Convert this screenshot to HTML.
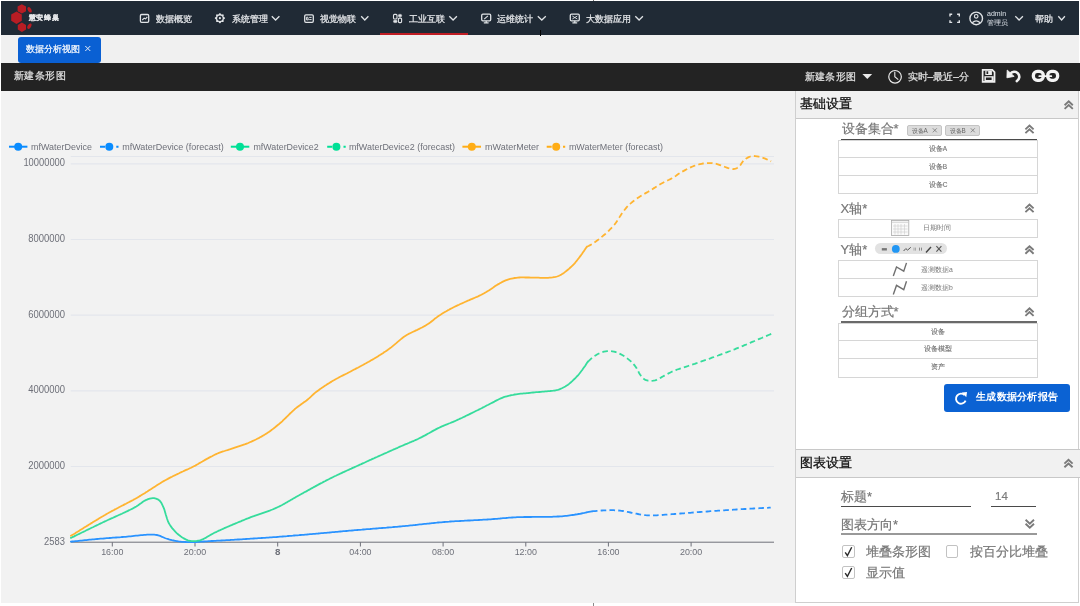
<!DOCTYPE html>
<html><head><meta charset="utf-8">
<style>
*{box-sizing:border-box;margin:0;padding:0}
html,body{width:1080px;height:606px;overflow:hidden;background:#fff;font-family:"Liberation Sans",sans-serif}
#root{position:absolute;left:0;top:0;width:1080px;height:606px;will-change:transform}
.a{position:absolute;white-space:nowrap}
#nav{left:1px;top:1px;width:1078px;height:34px;background:#202a35}
.nt{color:#e4e6e9;font-size:9px;line-height:12px;height:12px;top:12.5px;-webkit-text-stroke:0.25px #e4e6e9}
#tabs{left:1px;top:35px;width:1078px;height:28px;background:#f0f0f0}
#tab{left:17.5px;top:37px;width:83px;height:25.6px;background:#0a60d3;border-radius:3px}
#tbar{left:1px;top:63px;width:1079px;height:28px;background:#232323}
#chart{left:1px;top:91px;width:794px;height:512px;background:#f2f2f2}
#rp{left:795px;top:91px;width:284px;height:512px;background:#fff;border:1px solid #cfcfcf;border-top:none}
.hd{background:#f1f1f1;border-bottom:1px solid #c8c8c8}
.lbl{color:#777;font-size:13px;line-height:14px;height:14px;-webkit-text-stroke:0.2px #777}
.hdt{color:#111;font-size:13px;line-height:14px;height:14px;-webkit-text-stroke:0.3px #111}
.box{border:1px solid #d6d6d6;background:#fff}
.row{border-top:1px solid #d6d6d6}
.rt{color:#777;font-size:6.5px;line-height:8px;text-align:center;-webkit-text-stroke:0.15px #777}
svg{position:absolute;overflow:visible}
</style></head><body><div id="root">
<!-- NAV -->
<div id="nav" class="a"></div>
<svg style="left:0;top:0" width="80" height="36" viewBox="0 0 80 36">
 <g fill="#b81d24">
  <polygon points="16.5,11.5 21.8,14.6 21.8,20.8 16.5,23.9 11.2,20.8 11.2,14.6"/>
  <polygon points="21.8,4.2 26,6.6 26,11.2 21.8,13.6 17.6,11.2 17.6,6.6"/>
  <polygon points="21.9,22.5 26,24.9 26,29.6 21.9,32 17.8,29.6 17.8,24.9"/>
  <ellipse cx="29.6" cy="9.8" rx="1.7" ry="3" transform="rotate(-30 29.6 9.8)"/>
  <ellipse cx="29.4" cy="26.2" rx="1.7" ry="3" transform="rotate(30 29.4 26.2)"/>
 </g>
</svg>
<div class="a" style="left:28.5px;top:12px;font-size:7px;letter-spacing:0.9px;line-height:12px;color:#e4e6e9;font-weight:bold;-webkit-text-stroke:0.15px #e4e6e9">慧安蜂巢</div>

<!-- nav icons -->
<svg style="left:0;top:0" width="1080" height="36" viewBox="0 0 1080 36" fill="none" stroke="#e0e3e6" stroke-width="1.3">
 <rect x="140.4" y="14.5" width="8.3" height="7.8" rx="1.2"/>
 <path d="M142.3 20 L144.2 18.2 L145.6 18.9 L147.3 16.9" stroke-width="1.1"/>
 <polygon points="225.00,18.20 224.92,18.53 224.68,18.83 224.36,19.09 224.03,19.31 223.76,19.51 223.60,19.73 223.55,20.00 223.60,20.34 223.68,20.73 223.73,21.14 223.68,21.51 223.51,21.81 223.21,21.98 222.84,22.03 222.43,21.98 222.04,21.90 221.70,21.85 221.43,21.90 221.21,22.06 221.01,22.33 220.79,22.66 220.53,22.98 220.23,23.22 219.90,23.30 219.57,23.22 219.27,22.98 219.01,22.66 218.79,22.33 218.59,22.06 218.37,21.90 218.10,21.85 217.76,21.90 217.37,21.98 216.96,22.03 216.59,21.98 216.29,21.81 216.12,21.51 216.07,21.14 216.12,20.73 216.20,20.34 216.25,20.00 216.20,19.73 216.04,19.51 215.77,19.31 215.44,19.09 215.12,18.83 214.88,18.53 214.80,18.20 214.88,17.87 215.12,17.57 215.44,17.31 215.77,17.09 216.04,16.89 216.20,16.67 216.25,16.40 216.20,16.06 216.12,15.67 216.07,15.26 216.12,14.89 216.29,14.59 216.59,14.42 216.96,14.37 217.37,14.42 217.76,14.50 218.10,14.55 218.37,14.50 218.59,14.34 218.79,14.07 219.01,13.74 219.27,13.42 219.57,13.18 219.90,13.10 220.23,13.18 220.53,13.42 220.79,13.74 221.01,14.07 221.21,14.34 221.43,14.50 221.70,14.55 222.04,14.50 222.43,14.42 222.84,14.37 223.21,14.42 223.51,14.59 223.68,14.89 223.73,15.26 223.68,15.67 223.60,16.06 223.55,16.40 223.60,16.67 223.76,16.89 224.03,17.09 224.36,17.31 224.68,17.57 224.92,17.87" fill="#e0e3e6" stroke="none"/>
 <circle cx="219.9" cy="18.2" r="2.7" fill="#202a35" stroke="none"/>
 <circle cx="219.9" cy="18.2" r="1.1" fill="#e0e3e6" stroke="none"/>
 <rect x="304.7" y="14.9" width="8.6" height="7.4" rx="1.2"/>
 <path d="M306.6 17.2 L307.8 17.2 L308.3 19.9 L306.6 19.9 Z M309.2 17.4 H311.6 M309.2 19.6 H311.6" stroke-width="1"/>
 <rect x="393.5" y="14.4" width="3.5" height="4.6" rx="1" stroke-width="1.1"/>
 <rect x="398.4" y="14.4" width="3.2" height="2.4" rx="1" fill="#e0e3e6" stroke-width="0.6"/>
 <rect x="393.5" y="20.3" width="3.5" height="2.3" rx="1" fill="#e0e3e6" stroke-width="0.6"/>
 <rect x="398.4" y="18.1" width="3.2" height="4.5" rx="1" stroke-width="1.1"/>
 <rect x="481.7" y="14.2" width="9" height="6.6" rx="1.2"/>
 <path d="M486.2 20.8 V22.6 M483.8 22.9 H488.6" stroke-width="1.2"/>
 <path d="M484.2 19.2 L487.9 15.8" stroke-width="1.1"/>
 <rect x="570.3" y="14.2" width="9" height="6.6" rx="1.2"/>
 <path d="M574.8 20.8 V22.6 M572.4 22.9 H577.2" stroke-width="1.2"/>
 <path d="M572.3 16 L577.3 19 M577.3 16 L572.3 19" stroke-width="0.9"/>
 <!-- chevrons -->
 <path d="M271.8 16.3 L275.6 20 L279.4 16.3"/>
 <path d="M361.2 16.3 L364.8 20 L368.4 16.3"/>
 <path d="M449.3 16.3 L453.1 20 L456.9 16.3"/>
 <path d="M537.8 16.3 L541.8 20 L545.8 16.3"/>
 <path d="M635.3 16.3 L639.1 20 L642.9 16.3"/>
 <path d="M1015.3 16.3 L1019.1 20 L1022.9 16.3"/>
 <path d="M1058.3 16.3 L1061.6 20 L1064.9 16.3"/>
 <!-- fullscreen -->
 <path d="M950 16.5 V14.3 H952.2 M957.1 14.3 H959.3 V16.5 M959.3 20.2 V22.4 H957.1 M952.2 22.4 H950 V20.2" stroke-width="1.4"/>
 <!-- user -->
 <circle cx="976.2" cy="18.4" r="6.3" stroke-width="1.4"/>
 <circle cx="976.2" cy="16.3" r="1.8" stroke-width="1.2"/>
 <path d="M972.3 22.8 Q976.2 19 980.1 22.8" stroke-width="1.3"/>
</svg>
<div class="a nt" style="left:156px">数据概览</div>
<div class="a nt" style="left:232px">系统管理</div>
<div class="a nt" style="left:320px">视觉物联</div>
<div class="a nt" style="left:408.5px">工业互联</div>
<div class="a nt" style="left:497px">运维统计</div>
<div class="a nt" style="left:586px">大数据应用</div>
<div class="a" style="left:380px;top:32.5px;width:88px;height:2px;background:#c01d24"></div>
<div class="a" style="left:987px;top:10.3px;font-size:7px;line-height:8px;color:#dde2e8">admin</div>
<div class="a" style="left:987px;top:18.8px;font-size:7px;line-height:8px;color:#dde2e8">管理员</div>
<div class="a nt" style="left:1035px">帮助</div>

<!-- TABS -->
<div id="tabs" class="a"></div>
<div id="tab" class="a"></div>
<div class="a" style="left:25.5px;top:42.6px;font-size:8.8px;line-height:12px;color:#fff;-webkit-text-stroke:0.2px #fff">数据分析视图</div>
<svg style="left:0;top:0" width="100" height="60"><path d="M85.3 46 L90.3 51 M90.3 46 L85.3 51" stroke="#e8eef8" stroke-width="1"/></svg>

<!-- TITLE BAR -->
<div id="tbar" class="a"></div>
<div class="a" style="left:13.7px;top:69.4px;font-size:10px;letter-spacing:0.5px;line-height:13px;color:#e6e6e6;-webkit-text-stroke:0.2px #e6e6e6">新建条形图</div>
<div class="a" style="left:804.5px;top:69.5px;font-size:10px;letter-spacing:0.45px;line-height:13px;color:#e6e6e6;-webkit-text-stroke:0.2px #e6e6e6">新建条形图</div>
<div class="a" style="left:907.5px;top:69.5px;font-size:10.2px;line-height:13px;color:#e6e6e6;-webkit-text-stroke:0.2px #e6e6e6">实时–最近–分</div>
<svg style="left:0;top:0" width="1080" height="92" fill="none" stroke="#eaeaea">
 <path d="M862.4 74 H872.2 L867.3 79 Z" fill="#eaeaea" stroke="none"/>
 <circle cx="895.05" cy="76.8" r="6.3" stroke-width="1.2"/>
 <path d="M894.8 71.8 V76.8 L898.3 79.6" stroke-width="1.1"/>
</svg>
<svg style="left:0;top:0" width="1080" height="92">
 <!-- save -->
 <path d="M981.8 69 H992.6 L995.4 71.8 V82.8 H981.8 Z" fill="#eeeeee"/>
 <path d="M983.5 70.7 H991.9 L993.7 72.5 V81.1 H983.5 Z" fill="#232323"/>
 <rect x="985.3" y="70.7" width="6.6" height="4.3" fill="#eeeeee"/>
 <rect x="986.5" y="71.3" width="1.7" height="2.7" fill="#232323"/>
 <rect x="984.4" y="76.2" width="9.3" height="4.9" fill="#eeeeee"/>
 <rect x="985.9" y="77.5" width="5.7" height="2.5" fill="#232323"/>
 <!-- undo -->
 <path d="M1010.2 73.9 A5 5 0 1 1 1016.8 81.1" fill="none" stroke="#f2f2f2" stroke-width="2.6" stroke-linecap="round"/>
 <path d="M1007.2 70 L1006.9 77.8 L1014.2 76.4 Z" fill="#f2f2f2" stroke="#f2f2f2" stroke-width="0.8" stroke-linejoin="round"/>
 <!-- link -->
 <rect x="1033.35" y="71.45" width="10" height="8.9" rx="4" fill="none" stroke="#f4f4f4" stroke-width="3.3"/>
 <rect x="1047.65" y="71.45" width="10" height="8.9" rx="4" fill="none" stroke="#f4f4f4" stroke-width="3.3"/>
 <path d="M1039.3 76.2 H1051.3" stroke="#f4f4f4" stroke-width="1.8" stroke-linecap="round"/>
</svg>


<!-- CHART -->
<div id="chart" class="a"></div>
<svg style="left:0;top:0" width="1080" height="606">
 <g stroke="#e3e6ec" stroke-width="1.2">
  <path d="M70.7 156.5 H774"/>
  <path d="M70.7 163.9 H774"/>
  <path d="M70.7 239.5 H774"/>
  <path d="M70.7 315.2 H774"/>
  <path d="M70.7 390.9 H774"/>
  <path d="M70.7 466.5 H774"/>
 </g>
 <path d="M70.7 542.2 H774" stroke="#6e7079" stroke-width="1"/>
 <g stroke="#6e7079" stroke-width="1">
  <path d="M112.3 542.2 V546.5"/><path d="M195 542.2 V546.5"/><path d="M277.7 542.2 V546.5"/><path d="M360.4 542.2 V546.5"/>
  <path d="M443.1 542.2 V546.5"/><path d="M525.8 542.2 V546.5"/><path d="M608.4 542.2 V546.5"/><path d="M691.1 542.2 V546.5"/>
 </g>
 <g font-family="Liberation Sans, sans-serif" font-size="10" fill="#6e7079" text-anchor="end">
  <text x="65" y="166.3" textLength="41.6" lengthAdjust="spacingAndGlyphs">10000000</text>
  <text x="65" y="242" textLength="36.8" lengthAdjust="spacingAndGlyphs">8000000</text>
  <text x="65" y="317.7" textLength="36.8" lengthAdjust="spacingAndGlyphs">6000000</text>
  <text x="65" y="393.4" textLength="36.8" lengthAdjust="spacingAndGlyphs">4000000</text>
  <text x="65" y="469" textLength="36.8" lengthAdjust="spacingAndGlyphs">2000000</text>
  <text x="65" y="544.8" textLength="20.9" lengthAdjust="spacingAndGlyphs">2583</text>
 </g>
 <g font-family="Liberation Sans, sans-serif" font-size="9.8" fill="#6e7079" text-anchor="middle">
  <text x="112.3" y="555.2" textLength="22.3" lengthAdjust="spacingAndGlyphs">16:00</text>
  <text x="195" y="555.2" textLength="22.3" lengthAdjust="spacingAndGlyphs">20:00</text>
  <text x="277.7" y="555.2" font-weight="bold">8</text>
  <text x="360.4" y="555.2" textLength="22.3" lengthAdjust="spacingAndGlyphs">04:00</text>
  <text x="443.1" y="555.2" textLength="22.3" lengthAdjust="spacingAndGlyphs">08:00</text>
  <text x="525.8" y="555.2" textLength="22.3" lengthAdjust="spacingAndGlyphs">12:00</text>
  <text x="608.4" y="555.2" textLength="22.3" lengthAdjust="spacingAndGlyphs">16:00</text>
  <text x="691.1" y="555.2" textLength="22.3" lengthAdjust="spacingAndGlyphs">20:00</text>
 </g>
 <g fill="none" stroke-width="1.8" stroke-linejoin="round" stroke-linecap="round">
  <path d="M70.9 541.7 L72.4 541.5 L74.0 541.4 L75.5 541.2 L77.1 541.1 L78.6 540.9 L80.2 540.7 L81.7 540.6 L83.3 540.4 L84.8 540.2 L86.4 540.1 L87.9 539.9 L89.4 539.7 L91.0 539.6 L92.5 539.4 L94.1 539.3 L95.6 539.1 L97.2 539.0 L98.8 538.9 L100.3 538.7 L101.9 538.6 L103.5 538.5 L105.1 538.3 L106.6 538.2 L108.2 538.1 L109.8 538.0 L111.4 537.9 L113.0 537.7 L114.5 537.6 L116.1 537.5 L117.7 537.4 L119.3 537.3 L120.8 537.2 L122.4 537.0 L124.0 536.9 L125.6 536.8 L127.3 536.6 L128.9 536.4 L130.7 536.3 L132.4 536.1 L134.1 535.9 L135.9 535.7 L137.6 535.6 L139.3 535.4 L140.9 535.2 L142.6 535.1 L144.1 534.9 L145.6 534.8 L147.1 534.7 L148.4 534.7 L149.7 534.6 L150.8 534.6 L152.6 534.6 L154.2 534.7 L155.6 534.8 L156.9 535.0 L158.3 535.3 L160.0 535.8 L161.5 536.6 L163.1 537.3 L164.8 538.0 L166.2 538.5 L167.6 538.9 L169.0 539.4 L170.5 539.8 L172.0 540.2 L173.5 540.5 L175.1 540.8 L176.8 541.1 L178.5 541.4 L180.2 541.6 L182.0 541.8 L183.7 541.9 L185.2 542.0 L186.8 542.1 L188.4 542.1 L189.9 542.1 L191.5 542.1 L193.1 542.0 L194.8 542.0 L196.3 542.0 L197.7 541.9 L199.2 541.8 L200.7 541.7 L202.2 541.6 L203.8 541.5 L205.4 541.4 L207.0 541.3 L208.7 541.2 L210.1 541.1 L211.4 541.0 L212.8 541.0 L214.2 540.9 L215.6 540.8 L217.0 540.7 L218.5 540.7 L220.0 540.6 L221.5 540.5 L223.1 540.4 L224.8 540.3 L226.4 540.2 L228.2 540.1 L230.0 540.0 L231.2 539.9 L232.4 539.9 L233.7 539.8 L235.0 539.7 L236.3 539.6 L237.7 539.5 L239.0 539.5 L240.4 539.4 L241.8 539.3 L243.2 539.2 L244.7 539.1 L246.1 539.0 L247.6 538.9 L249.1 538.8 L250.7 538.7 L252.2 538.6 L253.7 538.5 L255.3 538.4 L256.9 538.3 L258.5 538.2 L260.1 538.1 L261.7 538.0 L263.3 537.9 L265.0 537.8 L266.6 537.7 L268.3 537.6 L269.9 537.4 L271.6 537.3 L273.3 537.2 L274.9 537.1 L276.6 537.0 L278.3 536.8 L280.0 536.7 L281.3 536.6 L282.7 536.5 L284.1 536.4 L285.5 536.3 L286.9 536.2 L288.4 536.0 L289.8 535.9 L291.3 535.8 L292.8 535.7 L294.3 535.5 L295.9 535.4 L297.4 535.3 L298.9 535.2 L300.5 535.0 L302.1 534.9 L303.7 534.8 L305.2 534.6 L306.8 534.5 L308.4 534.3 L310.0 534.2 L311.7 534.1 L313.3 533.9 L314.9 533.8 L316.5 533.6 L318.1 533.5 L319.7 533.3 L321.4 533.2 L323.0 533.1 L324.6 532.9 L326.2 532.8 L327.8 532.6 L329.4 532.5 L331.0 532.3 L332.6 532.2 L334.2 532.1 L335.7 531.9 L337.3 531.8 L338.8 531.6 L340.4 531.5 L341.9 531.4 L343.4 531.2 L344.9 531.1 L346.3 531.0 L347.8 530.9 L349.2 530.7 L350.7 530.6 L352.1 530.5 L353.4 530.4 L354.8 530.2 L356.1 530.1 L357.4 530.0 L358.7 529.9 L360.0 529.8 L361.8 529.7 L363.5 529.5 L365.2 529.4 L366.9 529.2 L368.5 529.1 L370.1 529.0 L371.7 528.8 L373.3 528.7 L374.8 528.6 L376.3 528.5 L377.8 528.4 L379.3 528.2 L380.7 528.1 L382.2 528.0 L383.6 527.9 L385.1 527.8 L386.5 527.7 L388.0 527.5 L389.4 527.4 L390.9 527.3 L392.4 527.2 L393.9 527.0 L395.4 526.9 L396.9 526.8 L398.4 526.6 L400.0 526.5 L401.5 526.4 L403.0 526.2 L404.5 526.1 L406.0 525.9 L407.5 525.8 L409.0 525.6 L410.6 525.4 L412.1 525.3 L413.6 525.1 L415.1 525.0 L416.7 524.8 L418.2 524.6 L419.7 524.4 L421.3 524.3 L422.8 524.1 L424.4 523.9 L425.9 523.8 L427.4 523.6 L429.0 523.5 L430.5 523.3 L432.1 523.1 L433.6 523.0 L435.2 522.8 L436.7 522.7 L438.3 522.5 L439.8 522.4 L441.3 522.3 L442.9 522.1 L444.4 522.0 L445.9 521.9 L447.5 521.8 L449.1 521.7 L450.6 521.5 L452.2 521.4 L453.8 521.3 L455.4 521.2 L457.0 521.1 L458.6 521.1 L460.2 521.0 L461.8 520.9 L463.4 520.8 L465.0 520.7 L466.6 520.6 L468.1 520.5 L469.7 520.5 L471.3 520.4 L472.8 520.3 L474.4 520.2 L475.9 520.2 L477.4 520.1 L478.9 520.0 L480.4 519.9 L481.9 519.8 L483.3 519.7 L484.8 519.7 L486.2 519.6 L487.5 519.5 L488.9 519.4 L490.6 519.3 L492.3 519.1 L493.9 519.0 L495.5 518.9 L497.0 518.8 L498.6 518.6 L500.0 518.5 L501.5 518.3 L503.0 518.2 L504.5 518.1 L505.9 518.0 L507.5 517.8 L509.0 517.7 L510.6 517.6 L512.2 517.5 L513.9 517.4 L515.6 517.3 L517.0 517.2 L518.4 517.2 L519.8 517.1 L521.3 517.1 L522.8 517.1 L524.4 517.0 L526.0 517.0 L527.6 517.0 L529.2 517.0 L530.9 517.0 L532.6 516.9 L534.2 516.9 L535.9 516.9 L537.6 516.9 L539.2 516.9 L540.9 516.9 L542.6 516.9 L544.2 516.9 L545.8 516.9 L547.4 516.8 L549.0 516.8 L550.5 516.8 L552.0 516.8 L553.4 516.7 L554.9 516.7 L556.2 516.6 L557.5 516.5 L558.8 516.5 L560.0 516.4 L561.9 516.3 L563.6 516.1 L565.3 515.9 L566.8 515.8 L568.3 515.6 L569.8 515.4 L571.2 515.2 L572.7 515.0 L574.1 514.8 L575.5 514.5 L577.0 514.3 L578.5 514.0 L580.0 513.8 L581.5 513.5 L583.0 513.2 L584.5 512.9 L586.0 512.5 L587.5 512.2 L588.9 511.9 L590.4 511.6 L591.9 511.3" stroke="#2a93ff"/>
  <path d="M591.9 511.3 L593.5 511.2 L595.2 511.1 L596.9 510.9 L598.5 510.8 L600.2 510.7 L601.8 510.5 L603.5 510.4 L605.1 510.4 L606.7 510.3 L608.4 510.3 L610.1 510.2 L611.8 510.2 L613.4 510.2 L615.1 510.3 L616.8 510.4 L618.4 510.5 L620.0 510.6 L621.5 510.8 L623.0 511.0 L624.5 511.3 L626.0 511.6 L627.5 511.9 L628.9 512.2 L630.4 512.5 L631.9 512.8 L633.4 513.1 L634.9 513.4 L636.4 513.7 L637.9 514.0 L639.4 514.3 L640.9 514.6 L642.3 514.8 L643.7 515.0 L645.5 515.2 L647.2 515.3 L648.9 515.4 L650.6 515.4 L652.6 515.4 L654.0 515.4 L655.4 515.3 L656.9 515.3 L658.4 515.2 L660.0 515.1 L661.7 515.0 L663.3 514.8 L665.1 514.7 L666.8 514.6 L668.6 514.4 L670.4 514.3 L671.8 514.2 L673.2 514.1 L674.6 514.0 L676.1 513.9 L677.6 513.8 L679.1 513.6 L680.6 513.5 L682.2 513.4 L683.8 513.3 L685.4 513.1 L687.0 513.0 L688.6 512.9 L690.2 512.8 L691.8 512.6 L693.5 512.5 L695.1 512.4 L696.7 512.2 L698.4 512.1 L700.0 512.0 L701.5 511.9 L702.9 511.8 L704.4 511.7 L705.9 511.6 L707.4 511.5 L708.9 511.4 L710.4 511.2 L711.9 511.1 L713.5 511.0 L715.0 510.9 L716.5 510.8 L718.1 510.7 L719.6 510.6 L721.1 510.5 L722.7 510.4 L724.2 510.3 L725.8 510.2 L727.3 510.1 L728.9 510.0 L730.4 509.9 L731.9 509.8 L733.5 509.7 L735.0 509.6 L736.5 509.5 L738.1 509.4 L739.6 509.3 L741.2 509.2 L742.7 509.1 L744.3 509.0 L745.8 509.0 L747.4 508.9 L748.9 508.8 L750.5 508.7 L752.1 508.6 L753.6 508.5 L755.2 508.4 L756.7 508.4 L758.3 508.3 L759.8 508.2 L761.4 508.1 L762.9 508.0 L764.5 507.9 L766.0 507.9 L767.6 507.8 L769.1 507.7 L770.7 507.6" stroke="#2a93ff" stroke-dasharray="5.6 3.2" stroke-linecap="butt"/>
  <path d="M70.9 537.9 L72.3 537.2 L73.7 536.6 L75.0 535.9 L76.4 535.2 L77.8 534.5 L79.2 533.9 L80.5 533.2 L81.9 532.5 L83.3 531.9 L84.7 531.2 L86.0 530.5 L87.4 529.8 L88.8 529.2 L90.2 528.5 L91.6 527.8 L92.9 527.2 L94.3 526.5 L95.7 525.8 L97.1 525.2 L98.5 524.5 L99.8 523.8 L101.2 523.2 L102.6 522.5 L104.0 521.8 L105.4 521.2 L106.9 520.5 L108.4 519.8 L109.9 519.1 L111.4 518.4 L112.9 517.8 L114.4 517.1 L115.9 516.4 L117.4 515.7 L118.9 515.0 L120.4 514.4 L121.9 513.7 L123.3 513.0 L124.7 512.4 L126.1 511.7 L127.5 511.1 L128.8 510.4 L130.1 509.8 L131.3 509.2 L132.5 508.6 L133.6 508.0 L134.7 507.4 L136.3 506.5 L137.8 505.5 L139.2 504.5 L140.5 503.6 L141.7 502.7 L142.9 501.8 L144.1 501.0 L145.3 500.4 L146.5 499.8 L148.1 499.2 L149.7 498.7 L151.2 498.4 L152.7 498.2 L154.1 498.2 L156.0 498.6 L157.8 499.3 L159.4 500.4 L160.4 501.6 L161.4 503.0 L162.2 504.6 L163.0 506.3 L163.7 507.9 L164.4 509.7 L164.9 511.4 L165.4 513.2 L165.9 515.0 L166.4 516.6 L166.9 518.3 L167.5 520.0 L168.1 521.7 L168.9 523.3 L169.7 524.6 L170.5 525.9 L171.4 527.1 L172.3 528.4 L173.4 529.5 L174.4 530.7 L175.5 531.9 L176.7 533.1 L178.0 534.2 L179.3 535.3 L180.6 536.3 L181.9 537.2 L183.3 538.1 L184.8 538.9 L186.3 539.7 L187.8 540.3 L189.3 540.7 L191.1 541.0 L193.0 541.1 L194.9 541.1 L196.7 540.9 L198.3 540.6 L199.8 540.3 L201.4 539.8 L203.1 539.1 L204.3 538.5 L205.6 537.9 L206.9 537.1 L208.2 536.3 L209.6 535.5 L211.1 534.6 L212.7 533.7 L214.4 532.8 L215.4 532.3 L216.6 531.8 L217.7 531.2 L218.9 530.6 L220.2 530.1 L221.5 529.5 L222.9 528.9 L224.3 528.2 L225.7 527.6 L227.1 527.0 L228.6 526.4 L230.1 525.7 L231.6 525.1 L233.1 524.4 L234.6 523.8 L236.2 523.2 L237.7 522.5 L239.2 521.9 L240.7 521.3 L242.1 520.7 L243.6 520.1 L245.0 519.5 L246.4 518.9 L247.8 518.4 L249.3 517.8 L250.8 517.2 L252.3 516.7 L253.7 516.2 L255.2 515.6 L256.7 515.1 L258.2 514.6 L259.6 514.1 L261.1 513.6 L262.5 513.1 L264.0 512.6 L265.4 512.1 L266.9 511.6 L268.3 511.1 L269.7 510.6 L271.1 510.0 L272.5 509.5 L273.9 508.9 L275.2 508.3 L276.6 507.7 L278.0 507.0 L279.4 506.4 L280.7 505.7 L282.1 505.0 L283.4 504.3 L284.7 503.6 L286.0 502.8 L287.3 502.1 L288.6 501.3 L289.9 500.6 L291.2 499.8 L292.5 499.1 L293.8 498.3 L295.1 497.6 L296.4 496.8 L297.8 496.0 L299.1 495.3 L300.5 494.5 L301.8 493.8 L303.1 493.1 L304.4 492.3 L305.8 491.6 L307.1 490.9 L308.4 490.1 L309.8 489.4 L311.1 488.6 L312.5 487.9 L313.8 487.1 L315.2 486.4 L316.6 485.6 L317.9 484.9 L319.3 484.1 L320.7 483.4 L322.1 482.7 L323.5 481.9 L324.9 481.2 L326.4 480.4 L327.8 479.7 L329.2 479.0 L330.5 478.3 L331.9 477.7 L333.2 477.0 L334.6 476.3 L335.9 475.7 L337.3 475.0 L338.7 474.4 L340.1 473.7 L341.5 473.1 L342.8 472.4 L344.2 471.8 L345.6 471.2 L347.0 470.5 L348.5 469.9 L349.9 469.2 L351.3 468.6 L352.7 467.9 L354.1 467.3 L355.5 466.7 L357.0 466.0 L358.4 465.4 L359.8 464.7 L361.3 464.1 L362.7 463.4 L364.1 462.8 L365.4 462.2 L366.8 461.5 L368.2 460.9 L369.6 460.2 L371.1 459.6 L372.5 458.9 L374.0 458.3 L375.4 457.6 L376.9 457.0 L378.3 456.3 L379.8 455.7 L381.3 455.0 L382.7 454.4 L384.1 453.7 L385.6 453.1 L387.0 452.5 L388.4 451.8 L389.8 451.2 L391.1 450.6 L392.5 450.0 L393.8 449.4 L395.1 448.9 L396.4 448.3 L397.6 447.8 L398.8 447.2 L400.0 446.7 L401.6 446.0 L403.1 445.4 L404.5 444.7 L406.0 444.1 L407.3 443.6 L408.7 443.0 L410.0 442.4 L411.3 441.9 L412.6 441.3 L413.9 440.8 L415.2 440.2 L416.6 439.6 L417.9 439.0 L419.3 438.3 L420.7 437.6 L422.1 436.9 L423.5 436.1 L425.0 435.4 L426.4 434.6 L427.8 433.8 L429.3 433.0 L430.7 432.2 L432.1 431.4 L433.5 430.6 L434.9 429.9 L436.3 429.1 L437.7 428.4 L439.1 427.7 L440.4 427.1 L441.9 426.4 L443.3 425.8 L444.8 425.2 L446.2 424.6 L447.5 424.1 L448.9 423.5 L450.3 423.0 L451.7 422.4 L453.2 421.8 L454.7 421.2 L456.2 420.5 L457.5 419.9 L458.8 419.3 L460.2 418.6 L461.7 418.0 L463.1 417.3 L464.6 416.6 L466.1 415.8 L467.6 415.1 L469.1 414.4 L470.6 413.6 L472.1 412.9 L473.5 412.2 L474.9 411.5 L476.3 410.8 L477.6 410.2 L478.8 409.6 L480.0 409.0 L481.6 408.2 L483.1 407.4 L484.5 406.7 L485.8 406.0 L487.1 405.3 L488.4 404.7 L489.7 404.0 L491.1 403.3 L492.5 402.6 L493.9 401.9 L495.2 401.1 L496.6 400.4 L498.0 399.7 L499.4 399.0 L500.8 398.4 L502.2 397.8 L503.7 397.2 L505.3 396.7 L506.8 396.3 L508.4 395.9 L509.9 395.5 L511.6 395.1 L513.3 394.8 L514.7 394.5 L516.1 394.3 L517.6 394.1 L519.1 393.9 L520.6 393.7 L522.2 393.6 L523.8 393.4 L525.3 393.3 L526.9 393.1 L528.5 393.0 L530.0 392.8 L531.5 392.6 L533.1 392.5 L534.6 392.4 L536.2 392.2 L537.8 392.1 L539.3 392.0 L540.9 391.9 L542.4 391.7 L543.9 391.6 L545.3 391.4 L546.7 391.3 L548.4 391.1 L550.1 391.0 L551.7 390.8 L553.3 390.7 L554.8 390.5 L556.3 390.2 L557.8 389.8 L559.4 389.3 L560.9 388.7 L562.4 388.0 L563.8 387.3 L565.3 386.5 L566.7 385.6 L568.0 384.7 L569.4 383.6 L570.7 382.5 L572.0 381.4 L573.2 380.2 L574.4 379.0 L575.6 377.8 L576.8 376.5 L578.0 375.3 L579.1 374.0 L580.1 372.7 L581.2 371.3 L582.2 370.0 L583.2 368.6 L584.1 367.3 L585.1 365.9 L586.0 364.5 L586.9 363.1 L587.8 361.7" stroke="#36dc9c"/>
  <path d="M587.8 361.7 L589.1 360.6 L590.4 359.4 L591.7 358.2 L593.0 357.1 L594.4 356.1 L595.9 355.2 L597.4 354.3 L599.0 353.5 L600.6 352.8 L602.2 352.2 L603.9 351.7 L605.6 351.4 L607.2 351.2 L608.9 351.1 L610.6 351.1 L612.3 351.3 L613.9 351.6 L615.6 352.0 L617.3 352.6 L618.9 353.3 L620.5 354.1 L622.2 355.0 L623.5 355.8 L624.9 356.7 L626.2 357.6 L627.5 358.6 L628.8 359.6 L630.0 360.6 L631.2 361.7 L632.4 362.9 L633.5 364.1 L634.6 365.4 L635.6 366.7 L636.6 368.2 L637.4 369.8 L638.3 371.4 L639.1 373.0 L640.0 374.4 L641.0 375.8 L642.1 377.2 L643.2 378.4 L644.4 379.4 L646.1 380.2 L648.0 380.7 L650.0 380.9 L651.6 380.9 L653.3 380.7 L655.0 380.3 L656.7 379.8 L658.2 379.2 L659.7 378.4 L661.2 377.4 L662.8 376.5 L664.4 375.6 L665.7 374.9 L667.1 374.2 L668.5 373.4 L669.9 372.7 L671.3 372.0 L672.8 371.3 L674.4 370.6 L675.8 370.1 L677.2 369.5 L678.6 369.1 L680.0 368.6 L681.5 368.1 L683.0 367.6 L684.7 367.1 L686.3 366.6 L688.1 366.0 L690.0 365.4 L691.1 365.0 L692.3 364.6 L693.5 364.2 L694.7 363.8 L696.0 363.3 L697.3 362.9 L698.7 362.4 L700.1 361.9 L701.5 361.4 L702.9 360.9 L704.4 360.4 L705.9 359.9 L707.4 359.3 L708.9 358.8 L710.4 358.3 L711.9 357.7 L713.5 357.2 L715.0 356.6 L716.6 356.0 L718.1 355.5 L719.7 354.9 L721.2 354.3 L722.8 353.8 L724.3 353.2 L725.8 352.6 L727.3 352.1 L728.8 351.5 L730.3 351.0 L731.7 350.4 L733.1 349.8 L734.6 349.3 L736.0 348.7 L737.4 348.1 L738.8 347.6 L740.3 347.0 L741.7 346.4 L743.1 345.8 L744.5 345.2 L746.0 344.6 L747.4 344.0 L748.8 343.4 L750.2 342.8 L751.6 342.2 L753.0 341.6 L754.5 341.0 L755.9 340.4 L757.3 339.8 L758.7 339.2 L760.1 338.6 L761.6 338.0 L763.0 337.4 L764.4 336.8 L765.8 336.2 L767.2 335.6 L768.6 335.0 L770.1 334.4 L771.5 333.8 L772.9 333.2" stroke="#36dc9c" stroke-dasharray="5.6 3.2" stroke-linecap="butt"/>
  <path d="M70.9 535.8 L72.2 535.0 L73.6 534.2 L74.9 533.4 L76.2 532.5 L77.6 531.7 L78.9 530.9 L80.2 530.1 L81.6 529.2 L82.9 528.4 L84.2 527.6 L85.6 526.7 L86.9 525.9 L88.3 525.1 L89.6 524.3 L90.9 523.4 L92.3 522.6 L93.6 521.8 L94.9 521.0 L96.2 520.2 L97.6 519.4 L98.9 518.6 L100.2 517.8 L101.5 517.0 L102.8 516.3 L104.1 515.5 L105.4 514.8 L106.6 514.0 L107.9 513.3 L109.3 512.5 L110.7 511.7 L112.2 510.9 L113.6 510.2 L115.0 509.4 L116.4 508.7 L117.7 508.0 L119.1 507.2 L120.5 506.5 L121.9 505.8 L123.3 505.1 L124.6 504.4 L126.0 503.7 L127.3 503.0 L128.7 502.3 L130.0 501.6 L131.4 500.9 L132.7 500.2 L134.0 499.4 L135.4 498.7 L136.7 498.0 L138.0 497.2 L139.3 496.4 L140.7 495.6 L142.0 494.8 L143.3 494.0 L144.7 493.2 L146.0 492.3 L147.4 491.5 L148.7 490.6 L150.0 489.7 L151.3 488.9 L152.6 488.1 L153.9 487.2 L155.2 486.4 L156.5 485.6 L157.7 484.8 L159.0 484.0 L160.2 483.3 L161.4 482.5 L162.5 481.8 L163.7 481.1 L164.8 480.5 L166.3 479.7 L167.8 478.9 L169.2 478.1 L170.6 477.4 L172.0 476.7 L173.3 476.0 L174.7 475.4 L176.0 474.7 L177.3 474.1 L178.7 473.5 L180.0 472.8 L181.4 472.1 L182.8 471.5 L184.2 470.8 L185.6 470.2 L187.0 469.6 L188.4 469.0 L189.8 468.3 L191.1 467.7 L192.5 467.0 L193.9 466.3 L195.3 465.6 L196.7 464.8 L198.1 464.0 L199.5 463.1 L201.0 462.3 L202.4 461.5 L203.7 460.7 L205.1 459.9 L206.5 459.1 L207.8 458.4 L209.2 457.6 L210.6 456.9 L212.0 456.2 L213.3 455.5 L214.7 454.8 L216.1 454.1 L217.5 453.5 L218.9 452.9 L220.3 452.4 L221.7 451.9 L223.1 451.4 L224.5 451.0 L226.0 450.5 L227.5 450.1 L228.9 449.6 L230.4 449.2 L231.9 448.7 L233.4 448.2 L234.8 447.7 L236.3 447.2 L237.8 446.7 L239.4 446.2 L240.9 445.7 L242.4 445.2 L243.8 444.7 L245.3 444.2 L246.7 443.6 L248.3 443.0 L249.8 442.3 L251.4 441.6 L252.9 440.9 L254.4 440.2 L255.9 439.5 L257.3 438.8 L258.7 438.1 L260.1 437.3 L261.4 436.6 L262.8 435.8 L264.0 435.1 L265.3 434.3 L266.6 433.4 L268.0 432.5 L269.2 431.7 L270.3 430.9 L271.5 430.0 L272.7 429.1 L273.9 428.2 L275.1 427.3 L276.3 426.3 L277.5 425.3 L278.8 424.3 L280.0 423.2 L281.1 422.3 L282.2 421.3 L283.3 420.2 L284.4 419.1 L285.6 418.0 L286.7 416.9 L287.8 415.8 L289.0 414.6 L290.1 413.5 L291.3 412.4 L292.4 411.3 L293.5 410.3 L294.6 409.3 L295.7 408.4 L297.1 407.3 L298.5 406.2 L299.9 405.2 L301.2 404.2 L302.6 403.3 L303.9 402.3 L305.2 401.4 L306.5 400.5 L307.7 399.5 L309.0 398.4 L310.2 397.3 L311.4 396.2 L312.5 395.1 L313.7 394.0 L315.0 392.9 L316.4 391.8 L317.5 391.0 L318.6 390.2 L319.8 389.3 L321.0 388.4 L322.3 387.6 L323.5 386.7 L324.9 385.8 L326.2 385.0 L327.5 384.1 L328.9 383.3 L330.2 382.4 L331.6 381.6 L332.9 380.8 L334.3 380.0 L335.6 379.2 L337.0 378.5 L338.4 377.8 L339.7 377.0 L341.1 376.3 L342.5 375.6 L343.9 374.9 L345.3 374.2 L346.8 373.5 L348.2 372.7 L349.6 372.0 L351.1 371.2 L352.4 370.5 L353.7 369.8 L355.1 369.1 L356.4 368.4 L357.8 367.7 L359.1 367.0 L360.5 366.2 L361.9 365.5 L363.3 364.8 L364.6 364.0 L366.0 363.3 L367.3 362.5 L368.7 361.8 L370.0 361.1 L371.2 360.3 L372.5 359.6 L373.9 358.8 L375.2 358.0 L376.5 357.2 L377.8 356.4 L379.1 355.6 L380.4 354.8 L381.6 354.0 L382.9 353.2 L384.1 352.3 L385.4 351.5 L386.6 350.7 L387.9 349.8 L389.1 348.9 L390.3 348.0 L391.5 347.1 L392.7 346.1 L393.9 345.1 L395.1 344.1 L396.3 343.1 L397.4 342.1 L398.6 341.1 L399.8 340.1 L401.0 339.1 L402.1 338.2 L403.3 337.3 L404.4 336.5 L405.6 335.7 L407.1 334.8 L408.6 333.9 L410.1 333.2 L411.6 332.5 L413.1 331.8 L414.6 331.1 L416.0 330.4 L417.4 329.8 L418.8 329.1 L420.4 328.3 L422.0 327.5 L423.4 326.7 L424.9 325.9 L426.4 325.0 L427.9 324.1 L429.2 323.2 L430.5 322.3 L431.8 321.2 L433.1 320.2 L434.4 319.1 L435.8 318.1 L437.1 317.1 L438.5 316.1 L439.8 315.3 L441.0 314.4 L442.3 313.6 L443.6 312.8 L444.9 312.0 L446.3 311.2 L447.6 310.4 L449.0 309.7 L450.4 308.9 L451.8 308.2 L453.2 307.5 L454.6 306.8 L456.0 306.1 L457.5 305.4 L459.0 304.7 L460.4 304.0 L461.9 303.4 L463.4 302.7 L464.9 302.0 L466.3 301.4 L467.8 300.7 L469.3 300.1 L470.8 299.4 L472.3 298.8 L473.8 298.2 L475.3 297.5 L476.8 296.9 L478.2 296.3 L479.5 295.6 L480.8 295.0 L482.3 294.2 L483.7 293.5 L485.0 292.7 L486.3 292.0 L487.5 291.2 L488.8 290.5 L490.0 289.7 L491.4 288.8 L492.7 287.9 L493.9 287.0 L495.2 286.1 L496.5 285.2 L497.9 284.4 L499.4 283.6 L500.9 282.7 L502.4 281.9 L504.0 281.1 L505.6 280.4 L507.2 279.8 L508.6 279.3 L510.1 278.9 L511.6 278.6 L513.1 278.3 L514.6 278.0 L516.2 277.8 L517.8 277.6 L519.3 277.5 L520.8 277.4 L522.4 277.4 L524.0 277.4 L525.6 277.5 L527.2 277.5 L528.9 277.5 L530.6 277.6 L532.3 277.6 L533.8 277.6 L535.3 277.6 L536.9 277.7 L538.5 277.7 L540.2 277.8 L541.8 277.8 L543.4 277.9 L545.0 277.9 L546.6 277.9 L548.1 277.8 L549.5 277.7 L550.8 277.6 L552.5 277.4 L554.1 277.1 L555.6 276.9 L557.0 276.5 L558.5 276.0 L560.0 275.3 L561.3 274.6 L562.6 273.8 L563.9 272.9 L565.2 271.9 L566.6 270.8 L567.9 269.7 L569.2 268.6 L570.4 267.5 L571.6 266.4 L572.7 265.3 L573.9 264.1 L575.1 262.8 L576.1 261.5 L577.1 260.3 L578.1 259.0 L579.1 257.7 L580.1 256.4 L581.1 255.1 L582.1 253.7 L583.0 252.3 L584.0 250.9 L584.9 249.6 L585.8 248.2 L586.8 246.8" stroke="#ffb431"/>
  <path d="M586.8 246.8 L588.5 246.0 L590.2 245.1 L592.0 244.1 L593.2 243.3 L594.4 242.5 L595.8 241.5 L597.1 240.5 L598.5 239.5 L599.9 238.4 L601.2 237.4 L602.4 236.4 L603.7 235.3 L605.0 234.2 L606.3 233.1 L607.5 232.0 L608.7 230.8 L609.8 229.7 L611.1 228.4 L612.2 227.1 L613.4 225.8 L614.6 224.5 L615.7 223.0 L616.6 221.7 L617.6 220.3 L618.5 218.9 L619.4 217.4 L620.3 215.9 L621.2 214.5 L622.2 213.1 L623.1 211.9 L624.0 210.7 L624.9 209.5 L625.8 208.4 L626.8 207.2 L627.8 206.1 L628.9 205.0 L630.1 203.9 L631.3 202.9 L632.6 201.8 L633.9 200.8 L635.2 199.8 L636.6 198.8 L638.0 197.8 L639.3 196.9 L640.7 196.0 L642.2 195.1 L643.7 194.3 L645.1 193.4 L646.6 192.6 L648.1 191.8 L649.6 190.9 L650.9 190.1 L652.2 189.3 L653.5 188.4 L654.9 187.6 L656.2 186.7 L657.5 185.9 L658.9 185.0 L660.2 184.2 L661.5 183.5 L663.0 182.7 L664.5 181.9 L666.0 181.2 L667.5 180.5 L669.0 179.8 L670.4 179.1 L671.9 178.3 L673.2 177.5 L674.5 176.7 L675.8 175.9 L677.0 175.0 L678.3 174.1 L679.6 173.3 L680.9 172.5 L682.2 171.7 L683.7 170.9 L685.1 170.1 L686.6 169.3 L688.1 168.5 L689.6 167.8 L691.1 167.1 L692.6 166.5 L694.1 165.9 L695.5 165.4 L697.0 164.9 L698.5 164.5 L700.0 164.1 L701.5 163.8 L703.0 163.5 L704.7 163.3 L706.4 163.2 L708.1 163.1 L709.8 163.1 L711.5 163.1 L713.2 163.3 L714.8 163.5 L716.4 163.8 L717.9 164.3 L719.3 164.8 L720.8 165.4 L722.2 166.0 L723.7 166.5 L725.2 167.0 L726.7 167.6 L728.3 168.2 L729.8 168.6 L731.2 169.0 L732.6 169.1 L734.2 169.0 L735.7 168.6 L737.1 168.0 L738.5 167.2 L739.5 166.2 L740.5 165.0 L741.4 163.6 L742.3 162.2 L743.3 160.9 L744.4 159.8 L745.8 158.8 L747.2 157.9 L748.7 157.1 L750.3 156.5 L751.9 156.1 L753.5 156.0 L755.2 156.1 L757.0 156.3 L758.8 156.7 L760.5 157.1 L762.2 157.6 L763.7 158.1 L765.2 158.7 L766.7 159.3 L768.2 160.0 L769.6 160.7 L771.1 161.3" stroke="#ffb431" stroke-dasharray="5.6 3.2" stroke-linecap="butt"/>
 </g>
 <!-- legend -->
 <g stroke-width="2">
  <path d="M9 146.7 H27.4" stroke="#0a8cff"/><circle cx="18.2" cy="146.7" r="4" fill="#0a8cff"/>
  <path d="M100 146.7 H105 M116.3 146.7 H118.5" stroke="#0a8cff"/><circle cx="109.3" cy="146.7" r="4" fill="#0a8cff"/>
  <path d="M230.8 146.7 H249.3" stroke="#00e096"/><circle cx="240" cy="146.7" r="4" fill="#00e096"/>
  <path d="M327.2 146.7 H332.2 M343.5 146.7 H345.7" stroke="#00e096"/><circle cx="336.4" cy="146.7" r="4" fill="#00e096"/>
  <path d="M462.4 146.7 H481" stroke="#ffad16"/><circle cx="471.8" cy="146.7" r="4" fill="#ffad16"/>
  <path d="M546.7 146.7 H551.7 M563 146.7 H565.2" stroke="#ffad16"/><circle cx="556.2" cy="146.7" r="4" fill="#ffad16"/>
 </g>
 <g font-family="Liberation Sans, sans-serif" font-size="9.4" fill="#6e7079">
  <text x="31" y="150.1" textLength="60.9" lengthAdjust="spacingAndGlyphs">mfWaterDevice</text>
  <text x="122.2" y="150.1" textLength="101.5" lengthAdjust="spacingAndGlyphs">mfWaterDevice (forecast)</text>
  <text x="253.5" y="150.1" textLength="65.1" lengthAdjust="spacingAndGlyphs">mfWaterDevice2</text>
  <text x="348.9" y="150.1" textLength="106.2" lengthAdjust="spacingAndGlyphs">mfWaterDevice2 (forecast)</text>
  <text x="485.1" y="150.1" textLength="54.0" lengthAdjust="spacingAndGlyphs">mWaterMeter</text>
  <text x="568.9" y="150.1" textLength="94.0" lengthAdjust="spacingAndGlyphs">mWaterMeter (forecast)</text>
 </g>
</svg>


<!-- RIGHT PANEL -->
<div id="rp" class="a"></div>
<div class="a hd" style="left:796px;top:91px;width:282px;height:28px"></div>
<div class="a hdt" style="left:799.5px;top:97px">基础设置</div>
<div class="a hd" style="left:796px;top:449px;width:284px;height:29px;border-top:1px solid #c8c8c8"></div>
<div class="a hdt" style="left:799.5px;top:455.5px">图表设置</div>

<div class="a lbl" style="left:841.5px;top:122px">设备集合*</div>
<div class="a" style="left:907.3px;top:125px;width:34.4px;height:10.8px;background:#dcdcdc;border:1px solid #c4c4c4;border-radius:2px"></div>
<div class="a" style="left:945.4px;top:125px;width:34.6px;height:10.8px;background:#dcdcdc;border:1px solid #c4c4c4;border-radius:2px"></div>
<div class="a" style="left:911.5px;top:126.5px;font-size:6.3px;line-height:8px;color:#666">设备A</div>
<div class="a" style="left:949.6px;top:126.5px;font-size:6.3px;line-height:8px;color:#666">设备B</div>
<div class="a" style="left:841px;top:138.8px;width:196.4px;height:1.6px;background:#4a4a4a"></div>
<div class="a box" style="left:838.4px;top:140.2px;width:199.4px;height:53.5px"></div>
<div class="a" style="left:839px;top:157.4px;width:198px;height:1px;background:#d6d6d6"></div>
<div class="a" style="left:839px;top:175.2px;width:198px;height:1px;background:#d6d6d6"></div>
<div class="a rt" style="left:838px;top:145px;width:200px">设备A</div>
<div class="a rt" style="left:838px;top:162.5px;width:200px">设备B</div>
<div class="a rt" style="left:838px;top:180.5px;width:200px">设备C</div>

<div class="a lbl" style="left:840.5px;top:201.5px">X轴*</div>
<div class="a box" style="left:838.4px;top:219.4px;width:199.4px;height:18.4px"></div>
<div class="a" style="left:923px;top:223.5px;font-size:7.2px;line-height:8px;color:#777">日期时间</div>

<div class="a lbl" style="left:840.5px;top:243px">Y轴*</div>
<div class="a" style="left:875.1px;top:243.1px;width:72px;height:11.4px;background:#e2e2e2;border-radius:6px"></div>
<div class="a box" style="left:838.4px;top:260.3px;width:199.4px;height:36.6px"></div>
<div class="a" style="left:839px;top:278.4px;width:198px;height:1px;background:#d6d6d6"></div>
<div class="a" style="left:921px;top:265.5px;font-size:6.8px;line-height:8px;color:#777">遥测数据a</div>
<div class="a" style="left:921px;top:283.8px;font-size:6.8px;line-height:8px;color:#777">遥测数据b</div>

<div class="a lbl" style="left:841.5px;top:304.5px">分组方式*</div>
<div class="a" style="left:841px;top:321.2px;width:196.4px;height:1.6px;background:#6a6a6a"></div>
<div class="a box" style="left:838.4px;top:322.5px;width:199.4px;height:55px"></div>
<div class="a" style="left:839px;top:340.2px;width:198px;height:1px;background:#d6d6d6"></div>
<div class="a" style="left:839px;top:357.8px;width:198px;height:1px;background:#d6d6d6"></div>
<div class="a rt" style="left:838px;top:327.5px;width:200px">设备</div>
<div class="a rt" style="left:838px;top:345px;width:200px">设备模型</div>
<div class="a rt" style="left:838px;top:363px;width:200px">资产</div>

<div class="a" style="left:944.4px;top:383.8px;width:125.6px;height:28px;background:#0b62d3;border-radius:3px"></div>
<div class="a" style="left:976px;top:391px;font-size:10px;letter-spacing:0.25px;line-height:12px;color:#fff;font-weight:bold">生成数据分析报告</div>

<div class="a lbl" style="left:841px;top:490px">标题*</div>
<div class="a" style="left:841px;top:505.8px;width:130.3px;height:1.4px;background:#4a4a4a"></div>
<div class="a" style="left:995px;top:488.7px;font-size:11.5px;line-height:14px;color:#7c7c7c;-webkit-text-stroke:0.2px #7c7c7c">14</div>
<div class="a" style="left:991.4px;top:505.8px;width:44.6px;height:1.4px;background:#4a4a4a"></div>
<div class="a lbl" style="left:841px;top:517.5px">图表方向*</div>
<div class="a" style="left:841px;top:532.6px;width:196.4px;height:2px;background:#999"></div>

<div class="a" style="left:842.1px;top:545.2px;width:12.6px;height:12.6px;border:1px solid #c2c2c2;border-radius:2px"></div>
<div class="a" style="left:945.7px;top:545.2px;width:12.8px;height:12.6px;border:1px solid #c2c2c2;border-radius:2px"></div>
<div class="a" style="left:842.1px;top:566px;width:12.6px;height:12.6px;border:1px solid #c2c2c2;border-radius:2px"></div>
<div class="a lbl" style="left:865.5px;top:545px">堆叠条形图</div>
<div class="a lbl" style="left:969.8px;top:545px">按百分比堆叠</div>
<div class="a lbl" style="left:865.5px;top:565.5px">显示值</div>

<svg style="left:0;top:0" width="1080" height="606" fill="none">
 <g stroke="#7a7a7a" stroke-width="1.9">
  <path d="M1064.6 105.2 L1068.7 101.4 L1072.8 105.2 M1064.6 108.9 L1068.7 105.1 L1072.8 108.9"/>
  <path d="M1025.4 129.4 L1029.5 125.6 L1033.6 129.4 M1025.4 133.1 L1029.5 129.3 L1033.6 133.1"/>
  <path d="M1025.4 208.4 L1029.5 204.6 L1033.6 208.4 M1025.4 212.1 L1029.5 208.3 L1033.6 212.1"/>
  <path d="M1025.4 250.0 L1029.5 246.2 L1033.6 250.0 M1025.4 253.7 L1029.5 249.9 L1033.6 253.7"/>
  <path d="M1025.4 312.2 L1029.5 308.4 L1033.6 312.2 M1025.4 315.9 L1029.5 312.1 L1033.6 315.9"/>
  <path d="M1064.4 463.6 L1068.5 459.8 L1072.6 463.6 M1064.4 467.3 L1068.5 463.5 L1072.6 467.3"/>
  <path d="M1025.6 519.8 L1029.8 523.6 L1034.0 519.8 M1025.6 523.8 L1029.8 527.6 L1034.0 523.8"/>
 </g>
 <!-- calendar -->
 <rect x="891.6" y="220.4" width="17.2" height="15.1" stroke="#aaa" stroke-width="0.8" fill="#fafafa"/>
 <path d="M892 222.3 H908.4" stroke="#ccc" stroke-width="0.8"/>
 <g stroke="#ccc" stroke-width="0.6"><path d="M895 224 V234.5 M898 224 V234.5 M901 224 V234.5 M904.5 224 V234.5 M893 226 H907.5 M893 229 H907.5 M893 232 H907.5"/></g>
 <!-- zigzag -->
 <path d="M893.3 276 L896.5 267 L903.75 271.2 L906.5 262.9" stroke="#707070" stroke-width="1.4"/>
 <path d="M893.3 294.4 L896.5 285.4 L903.75 289.6 L906.5 281.3" stroke="#707070" stroke-width="1.4"/>
 <!-- y pill icons -->
 <rect x="881.8" y="248.1" width="5.1" height="2.4" fill="#777"/>
 <circle cx="895.8" cy="248.9" r="3.9" fill="#2196f3"/>
 <path d="M903.6 251 L905.8 248.6 L907.6 250.1 L910.8 247.3" stroke="#555" stroke-width="1"/>
 <path d="M914 247.6 V250.6 M915.5 247.6 V250.6" stroke="#999" stroke-width="0.8"/>
 <path d="M919.5 247.6 V250.6 M921.5 247.6 V250.6" stroke="#888" stroke-width="1"/>
 <path d="M926 252.5 L931 247" stroke="#444" stroke-width="1.4"/>
 <path d="M936.4 246.2 L941.4 251.6 M941.4 246.2 L936.4 251.6" stroke="#555" stroke-width="1.1"/>
 <!-- chip x -->
 <path d="M932.8 128.3 L936.8 132.3 M936.8 128.3 L932.8 132.3" stroke="#777" stroke-width="0.8"/>
 <path d="M970.8 128.3 L974.8 132.3 M974.8 128.3 L970.8 132.3" stroke="#777" stroke-width="0.8"/>
 <!-- refresh icon -->
 <path d="M964.6 395.2 A5 5 0 1 0 965.6 400.6" stroke="#fff" stroke-width="1.9"/>
 <path d="M961.8 392.6 L967 392 L966.3 397.2 Z" fill="#fff"/>
 <!-- checks -->
 <path d="M845.2 552.3 L847.4 555.6 L851.7 547.2" stroke="#2a2a2a" stroke-width="1.4"/>
 <path d="M845.2 573.1 L847.4 576.4 L851.7 568" stroke="#2a2a2a" stroke-width="1.4"/>
</svg>

<div class="a" style="left:540px;top:30px;width:1px;height:6px;background:#050505"></div>
<div class="a" style="left:593px;top:0;width:1px;height:1px;background:#707070"></div>
<div class="a" style="left:593px;top:603px;width:1px;height:3px;background:#8a8a8a"></div>
</div></body></html>
